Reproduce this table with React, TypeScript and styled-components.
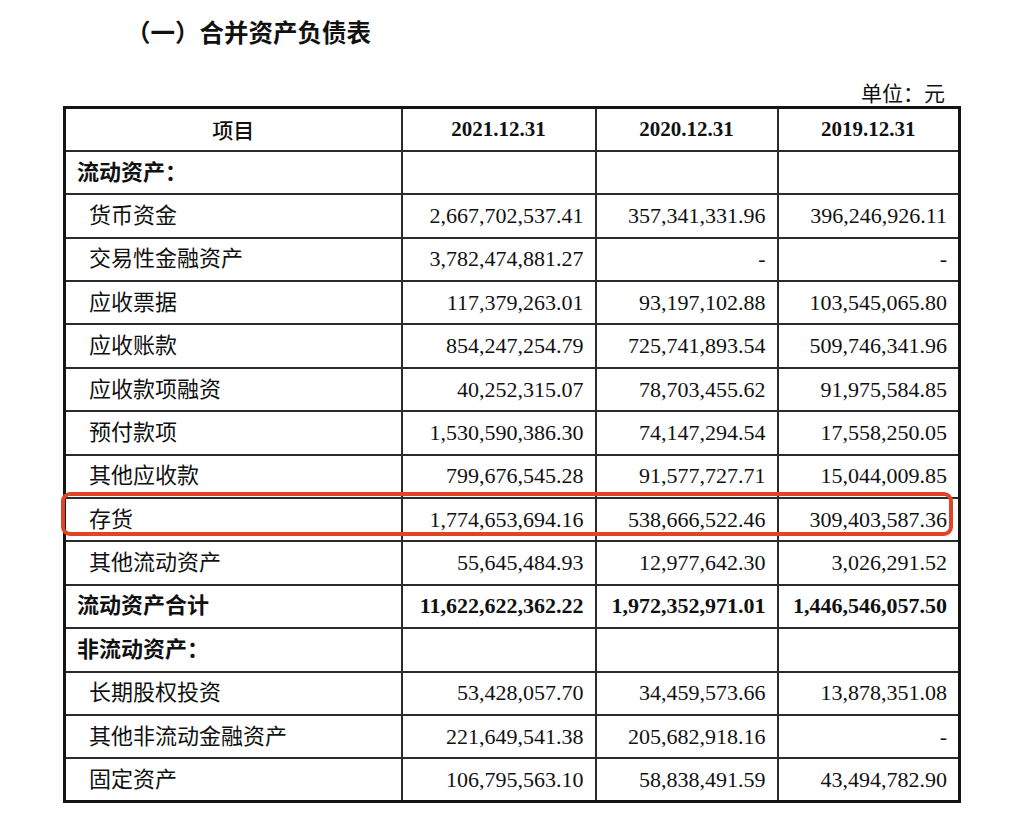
import React from "react";
import styled, {createGlobalStyle} from "styled-components";

const GlobalStyle = createGlobalStyle`
  html, body {
    margin: 0;
    padding: 0;
    background: #ffffff;
  }
  body {
    font-family: "Liberation Serif", "Noto Sans CJK SC", serif;
    color: #111111;
  }
`;

const Page = styled.div`
  width: 1024px;
  height: 825px;
  padding: 0 66px 0 63px;
  box-sizing: border-box;
  overflow: hidden;
`;

const Title = styled.h1`
  margin: 16px 0 0 63px;
  font-family: "Noto Sans CJK SC", sans-serif;
  font-size: 24.5px;
  font-weight: 700;
  line-height: 32px;
`;

const Unit = styled.div`
  margin-top: 30px;
  padding-right: 13px;
  text-align: right;
  font-family: "Noto Sans CJK SC", sans-serif;
  font-size: 21px;
  line-height: 28px;
`;

const TableWrap = styled.div`
  position: relative;
`;

const Sheet = styled.table`
  width: 895px;
  border-collapse: collapse;
  border: 3px solid #151515;
  table-layout: fixed;
`;

const Row = styled.tr`
  height: 43.4px;
`;

const Cell = styled.td<{ $align?: "left" | "right"; $indent?: boolean; $bold?: boolean }>`
  border: 2px solid #2b2b2b;
  padding: 0 ${p => (p.$align === "right" ? "11px" : "0")} 0 ${p => (p.$indent ? "23px" : "11px")};
  text-align: ${p => p.$align ?? "left"};
  font-size: 22px;
  font-weight: ${p => (p.$bold ? 700 : 400)};
  line-height: 1;
  white-space: nowrap;
  vertical-align: middle;
`;

const HeadCell = styled.th<{ $cjk?: boolean }>`
  border: 2px solid #2b2b2b;
  font-family: ${p => (p.$cjk ? "\"Noto Sans CJK SC\", sans-serif" : "\"Liberation Serif\", serif")};
  font-size: 21px;
  font-weight: ${p => (p.$cjk ? 500 : 700)};
  text-align: center;
  vertical-align: middle;
  padding: 0;
`;

const Highlight = styled.div<{ $row: number }>`
  position: absolute;
  left: -2px;
  top: ${p => p.$row * 43.4 - 5}px;
  width: 892px;
  height: 44px;
  box-sizing: border-box;
  border: 4px solid #dd4526;
  border-radius: 9px;
  pointer-events: none;
`;

type Line = {
  label: string;
  values?: [string, string, string];
  kind: "section" | "item" | "total";
};

const lines: Line[] = [
  {label: "流动资产：", kind: "section"},
  {label: "货币资金", kind: "item", values: ["2,667,702,537.41", "357,341,331.96", "396,246,926.11"]},
  {label: "交易性金融资产", kind: "item", values: ["3,782,474,881.27", "-", "-"]},
  {label: "应收票据", kind: "item", values: ["117,379,263.01", "93,197,102.88", "103,545,065.80"]},
  {label: "应收账款", kind: "item", values: ["854,247,254.79", "725,741,893.54", "509,746,341.96"]},
  {label: "应收款项融资", kind: "item", values: ["40,252,315.07", "78,703,455.62", "91,975,584.85"]},
  {label: "预付款项", kind: "item", values: ["1,530,590,386.30", "74,147,294.54", "17,558,250.05"]},
  {label: "其他应收款", kind: "item", values: ["799,676,545.28", "91,577,727.71", "15,044,009.85"]},
  {label: "存货", kind: "item", values: ["1,774,653,694.16", "538,666,522.46", "309,403,587.36"]},
  {label: "其他流动资产", kind: "item", values: ["55,645,484.93", "12,977,642.30", "3,026,291.52"]},
  {label: "流动资产合计", kind: "total", values: ["11,622,622,362.22", "1,972,352,971.01", "1,446,546,057.50"]},
  {label: "非流动资产：", kind: "section"},
  {label: "长期股权投资", kind: "item", values: ["53,428,057.70", "34,459,573.66", "13,878,351.08"]},
  {label: "其他非流动金融资产", kind: "item", values: ["221,649,541.38", "205,682,918.16", "-"]},
  {label: "固定资产", kind: "item", values: ["106,795,563.10", "58,838,491.59", "43,494,782.90"]},
];

const years = ["2021.12.31", "2020.12.31", "2019.12.31"];

const App: React.FC = () => {
  const highlighted = lines.findIndex(l => l.label === "存货") + 1;

  return (
    <Page>
      <GlobalStyle/>
      <Title>（一）合并资产负债表</Title>
      <Unit>单位：元</Unit>
      <TableWrap>
        <Sheet>
          <colgroup>
            <col style={{width: 337}}/>
            <col style={{width: 194}}/>
            <col style={{width: 182}}/>
            <col style={{width: 182}}/>
          </colgroup>
          <thead>
            <Row>
              <HeadCell $cjk>项目</HeadCell>
              {years.map(y => <HeadCell key={y}>{y}</HeadCell>)}
            </Row>
          </thead>
          <tbody>
            {lines.map(line => (
              <Row key={line.label}>
                <Cell $indent={line.kind === "item"} $bold={line.kind !== "item"}>{line.label}</Cell>
                {[0, 1, 2].map(i => (
                  <Cell key={i} $align="right" $bold={line.kind === "total"}>
                    {line.values ? line.values[i] : ""}
                  </Cell>
                ))}
              </Row>
            ))}
          </tbody>
        </Sheet>
        <Highlight $row={highlighted}/>
      </TableWrap>
    </Page>
  );
};

export default App;
